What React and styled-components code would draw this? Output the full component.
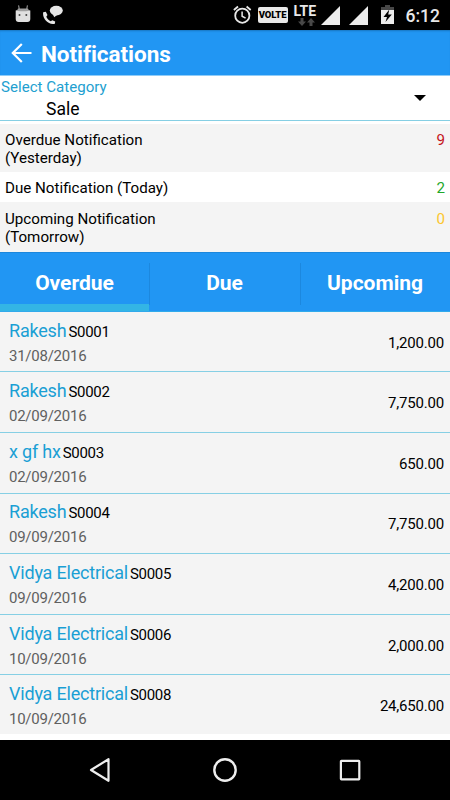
import React from "react";
import styled, { createGlobalStyle } from "styled-components";

const summary = [
  { label: "Overdue Notification", when: "(Yesterday)", count: 9, color: "#c4161c", height: 48, top: 8 },
  { label: "Due Notification (Today)", count: 2, color: "#1fa82b", height: 30, top: 8 },
  { label: "Upcoming Notification", when: "(Tomorrow)", count: 0, color: "#fcc62d", height: 50, top: 9 },
];

const tabs = ["Overdue", "Due", "Upcoming"];

const bills = [
  { name: "Rakesh", code: "S0001", date: "31/08/2016", amount: "1,200.00" },
  { name: "Rakesh", code: "S0002", date: "02/09/2016", amount: "7,750.00" },
  { name: "x gf hx", code: "S0003", date: "02/09/2016", amount: "650.00" },
  { name: "Rakesh", code: "S0004", date: "09/09/2016", amount: "7,750.00" },
  { name: "Vidya Electrical", code: "S0005", date: "09/09/2016", amount: "4,200.00" },
  { name: "Vidya Electrical", code: "S0006", date: "10/09/2016", amount: "2,000.00" },
  { name: "Vidya Electrical", code: "S0008", date: "10/09/2016", amount: "24,650.00" },
];

function DroidIcon() {
  return (
    <svg width="16" height="18" viewBox="0 0 16 18">
      <path d="M3.5 0.3 4.3 4M12.5 0.3 11.7 4" stroke="#888" strokeWidth="1.2" />
      <path d="M.7 5.5q7.300-2 14.600 0v8.500a3 3 0 0 1-3 3H3.700a3 3 0 0 1-3-3z" fill="#e0e0e0" />
      <path d="M3 3.500h10l1 2.300q-6 1-12 0z" fill="#a0a0a0" />
      <circle cx="4.5" cy="10" r="1" fill="#444" />
      <circle cx="11.3" cy="10" r="1" fill="#444" />
    </svg>
  );
}

function CallIcon() {
  return (
    <svg width="21" height="20" viewBox="0 0 21 20" fill="#e6e6e6">
      <ellipse cx="13.3" cy="5.6" rx="6.5" ry="4.8" />
      <path d="M9.500 9 11.300 12.300 14.500 9.500z" />
      <path d="M.2 7.300 2.800 6.700 4.500 10 3.300 11.700C4.300 13.700 5.800 15.200 7.800 16.200L9.300 15.200 12.200 16.500 11.900 18.700C5.500 20.500-1 13.500.2 7.300z" />
    </svg>
  );
}

function AlarmIcon() {
  return (
    <svg width="19" height="19" viewBox="0 0 19 19" fill="none" stroke="#e8e8e8">
      <circle cx="9.3" cy="10.7" r="7.1" strokeWidth="1.8" />
      <path d="M.9 5 5 1.500M17.700 5 13.600 1.500" strokeWidth="1.8" />
      <path d="M9.100 6.500v4.700l3.500 2" strokeWidth="1.5" />
    </svg>
  );
}

function DataArrows() {
  return (
    <svg width="17" height="8" viewBox="0 0 17 8" fill="#484848">
      <path d="M2.500 0h3v3.500H8L4 8 0 3.500h2.500z" />
      <path d="M11.500 8h3V4.500H17L13 0 9 4.500h2.500z" />
    </svg>
  );
}

function SignalIcon() {
  return (
    <svg width="19" height="19" viewBox="0 0 19 19">
      <path d="M19 0v19H0z" fill="#ececec" />
    </svg>
  );
}

function BatteryIcon() {
  return (
    <svg width="13" height="19" viewBox="0 0 13 19">
      <path d="M4 0h5v2h4v4H0V2h4z" fill="#484848" />
      <path d="M0 5h13v14H0z" fill="#ececec" />
      <path d="M8.300 4.500 2.500 12H6l-1.500 5L10.800 9.500H7.200z" fill="#000" />
    </svg>
  );
}

function BackArrow() {
  return (
    <svg width="21" height="20" viewBox="0 0 21 20" fill="none" stroke="#fff" strokeWidth="2.2">
      <path d="M10.800 1 1.800 10l9 9M2 10h18.500" />
    </svg>
  );
}

export default function App() {
  return (
    <>
      <GlobalStyle />
      <Screen>
        <StatusBar>
          <DroidIcon />
          <CallSlot>
            <CallIcon />
          </CallSlot>
          <StatusRight>
            <AlarmIcon />
            <Volte>VOLTE</Volte>
            <Lte>
              <span>LTE</span>
              <DataArrows />
            </Lte>
            <Signals>
              <SignalIcon />
              <SignalIcon />
            </Signals>
            <BatteryIcon />
            <Clock>6:12</Clock>
          </StatusRight>
        </StatusBar>

        <AppBar>
          <BackArrow />
          <Title>Notifications</Title>
        </AppBar>

        <Category>
          <div>
            <CategoryLabel>Select Category</CategoryLabel>
            <CategoryValue>Sale</CategoryValue>
          </div>
          <Caret />
        </Category>

        {summary.map((item, i) => (
          <SummaryRow key={item.label} $height={item.height} $top={item.top} $shaded={i % 2 === 0}>
            <div>
              {item.label}
              {item.when && <div>{item.when}</div>}
            </div>
            <Count $color={item.color}>{item.count}</Count>
          </SummaryRow>
        ))}

        <Tabs>
          {tabs.map((tab, i) => (
            <Tab key={tab} $active={i === 0}>
              {tab}
            </Tab>
          ))}
        </Tabs>

        <List>
          {bills.map((bill) => (
            <Bill key={bill.code}>
              <div>
                <BillHead>
                  <Name>{bill.name}</Name>
                  <Code>{bill.code}</Code>
                </BillHead>
                <BillDate>{bill.date}</BillDate>
              </div>
              <Amount>{bill.amount}</Amount>
            </Bill>
          ))}
        </List>

        <NavBar>
          <svg width="22" height="26" viewBox="0 0 22 26" fill="none" stroke="#eee" strokeWidth="2.2" strokeLinejoin="round">
            <path d="M19.500 2.200v21.600L2 13z" />
          </svg>
          <svg width="26" height="26" viewBox="0 0 26 26" fill="none" stroke="#eee" strokeWidth="2.4">
            <circle cx="13" cy="13" r="10.7" />
          </svg>
          <svg width="22" height="22" viewBox="0 0 22 22" fill="none" stroke="#eee" strokeWidth="2.2">
            <rect x="1.9" y="1.9" width="18.4" height="18.4" rx="0.5" />
          </svg>
        </NavBar>
      </Screen>
    </>
  );
}

const GlobalStyle = createGlobalStyle`
  * {
    box-sizing: border-box;
  }

  body {
    margin: 0;
    background: #fff;
    font-family: Roboto, "Liberation Sans", sans-serif;
  }

  svg {
    display: block;
    flex: none;
  }
`;

const Screen = styled.div`
  display: flex;
  flex-direction: column;
  width: 450px;
  height: 800px;
  overflow: hidden;
  color: #000;
  white-space: nowrap;
`;

const StatusBar = styled.div`
  flex: none;
  display: flex;
  align-items: flex-start;
  height: 30px;
  padding: 5px 10px 0 15px;
  background: #000;
`;

const CallSlot = styled.div`
  margin-left: 12px;
`;

const StatusRight = styled.div`
  display: flex;
  align-items: flex-start;
  margin-left: auto;
`;

const Volte = styled.div`
  width: 30px;
  height: 16px;
  margin: 2px 6px 0 6px;
  border-radius: 2px;
  background: #e8e8e8;
  color: #000;
  font-size: 9.5px;
  font-weight: 900;
  letter-spacing: -0.1px;
  line-height: 16px;
  text-align: center;
`;

const Lte = styled.div`
  width: 22px;
  color: #e8e8e8;
  font-size: 14px;
  font-weight: 700;
  line-height: 13px;

  svg {
    margin: 0 0 0 4px;
  }
`;

const Signals = styled.div`
  display: flex;
  gap: 9px;
  margin: 1px 13px 0 5px;
`;

const Clock = styled.div`
  margin-left: 12px;
  color: #e8e8e8;
  font-size: 17.5px;
  font-weight: 500;
  line-height: 22px;
`;

const AppBar = styled.div`
  flex: none;
  display: flex;
  align-items: center;
  height: 46px;
  padding-left: 11px;
  border-bottom: 1px solid #8fccf8;
  background: #2196f3;
  box-shadow: inset 0 2px 2px -1px #1976c0;
`;

const Title = styled.h1`
  margin: 3px 0 0 9px;
  color: #fff;
  font-size: 22.5px;
  font-weight: 700;
  letter-spacing: -0.05px;
  line-height: 26px;
`;

const Category = styled.div`
  flex: none;
  display: flex;
  justify-content: space-between;
  height: 45px;
  margin-bottom: 3px;
  padding: 0 24px 0 1px;
  border-bottom: 1px solid #86cfe4;
`;

const CategoryLabel = styled.div`
  padding-top: 2px;
  color: #239fd0;
  font-size: 15.1px;
  line-height: 18px;
`;

const CategoryValue = styled.div`
  padding-left: 45px;
  font-size: 17.5px;
  line-height: 26px;
`;

const Caret = styled.div`
  align-self: flex-start;
  margin-top: 19px;
  border: 6px solid transparent;
  border-top-color: #000;
  border-bottom: 0;
`;

const SummaryRow = styled.div`
  flex: none;
  display: flex;
  justify-content: space-between;
  height: ${(props) => props.$height}px;
  padding: ${(props) => props.$top}px 5px 0;
  background: ${(props) => (props.$shaded ? "#f4f4f4" : "#fff")};
  font-size: 15.15px;
  line-height: 17.5px;
`;

const Count = styled.div`
  color: ${(props) => props.$color};
`;

const Tabs = styled.div`
  flex: none;
  display: grid;
  grid-template-columns: 149px 151px 150px;
  grid-template-rows: 58px;
  height: 60px;
  border-top: 1px solid #1c87dc;
  border-bottom: 1px solid #31aaeb;
  background: #2196f3;
`;

const Tab = styled.div`
  height: 58px;
  border-bottom: 7px solid ${(props) => (props.$active ? "#33b5e5" : "transparent")};
  color: #fff;
  font-size: 21px;
  font-weight: 700;
  line-height: 61px;
  text-align: center;

  & + & {
    background: linear-gradient(#1c88df, #1c88df) left top 10px / 1px 42px no-repeat;
  }
`;

const List = styled.div`
  flex: 1;
`;

const Bill = styled.div`
  display: flex;
  justify-content: space-between;
  align-items: center;
  height: 60.66px;
  padding: 0 6px 0 9px;
  border-bottom: 1px solid #86cfe4;
  background: #f4f4f4;

  &:first-child {
    height: 60.2px;
  }

  &:last-child {
    height: 58.5px;
    border-bottom: 0;
  }
`;

const BillHead = styled.div`
  display: flex;
  align-items: baseline;
  padding-top: 3px;
  line-height: 24px;
`;

const Name = styled.span`
  color: #1a9fd4;
  font-size: 18px;
  letter-spacing: -0.2px;
`;

const Code = styled.span`
  margin-left: 2px;
  font-size: 15px;
  letter-spacing: -0.3px;
`;

const BillDate = styled.div`
  color: #606060;
  font-size: 15px;
  letter-spacing: -0.25px;
  line-height: 24px;
`;

const Amount = styled.div`
  padding-top: 2px;
  font-size: 15px;
  letter-spacing: -0.2px;
`;

const NavBar = styled.div`
  flex: none;
  display: flex;
  align-items: center;
  justify-content: space-between;
  height: 60px;
  padding: 0 89px;
  background: #000;
`;
